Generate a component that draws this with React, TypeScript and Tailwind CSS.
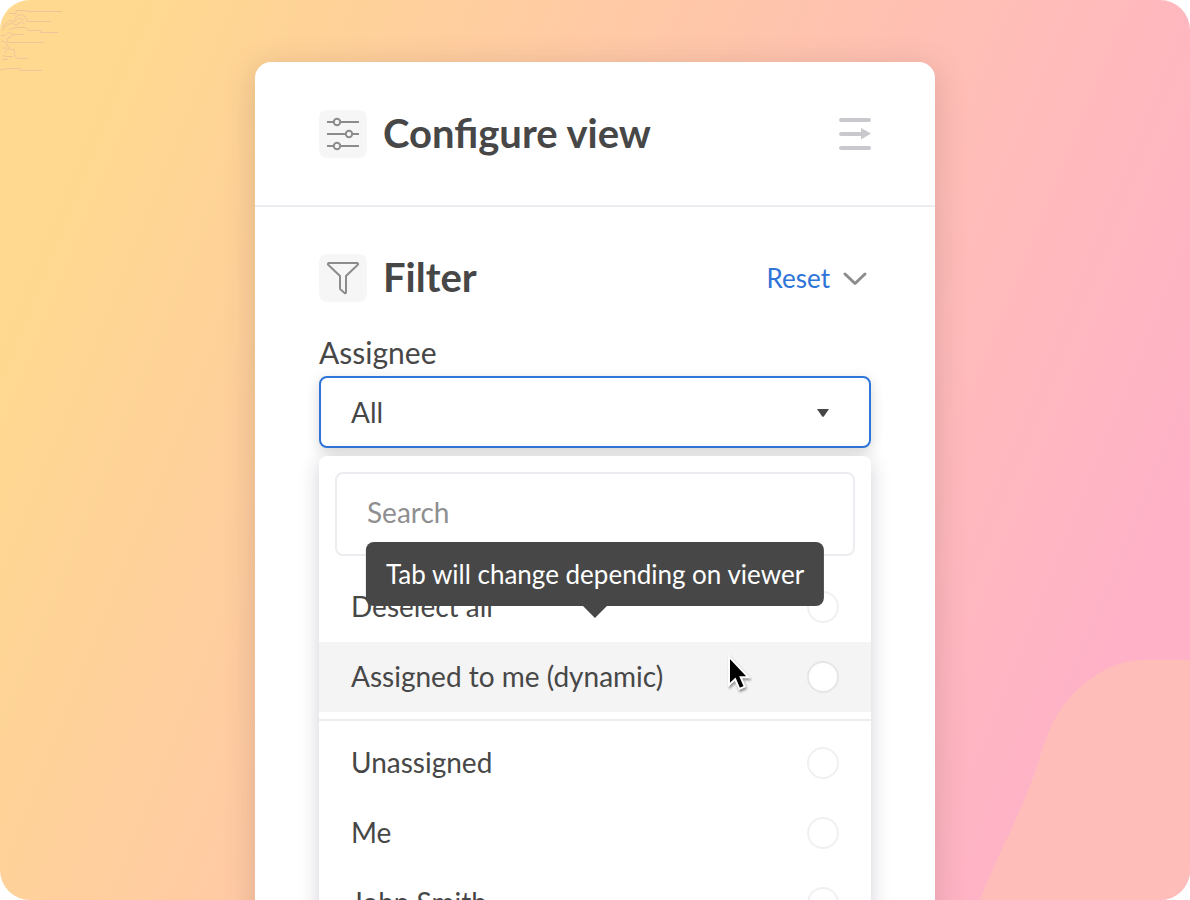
import { useState } from "react";

const people = ["Unassigned", "Me", "John Smith"];

function Option({ label, active = false }: { label: string; active?: boolean }) {
  return (
    <label
      className={
        active
          ? "flex h-[70px] items-center justify-between bg-[#f4f4f5] px-8"
          : "flex h-[70px] items-center justify-between px-8"
      }
    >
      <span className="pb-0.5">{label}</span>
      <input
        type="checkbox"
        className={
          active
            ? "size-8 shrink-0 appearance-none rounded-full border-2 border-[#e6e6e8] bg-white checked:bg-[#2f74d8]"
            : "size-8 shrink-0 appearance-none rounded-full border-2 border-[#f0f0f3] bg-white checked:bg-[#2f74d8]"
        }
      />
    </label>
  );
}

function Backdrop() {
  return (
    <>
      <svg className="absolute top-0 left-0" width="64" height="74" fill="none" stroke="#f0c49b" aria-hidden="true">
        <path d="M9 13.500h7v-3h10v1h36M14 20.500l3-5 5-1 4 3 1 4h24M3 30l1-5 6-5 4 2 5-4 5 2M4 27l7-4 5 2 5-3 4 2M9 29.500l7-2h10l2 3h13v2h17M1 35.500h4l3-3 6 2h10M7 42.500h37M7 42l1-4 6-3M1 41l4 1 2 3 2 3-4 4 1 2M2 48h5M9 49.500h5l1 7 3 2h10M3 55.500l3 1h7M2 59.500h6M0 69.500h5v-1h15v2h22" />
      </svg>
      <svg className="absolute right-0 bottom-0" width="210" height="240" viewBox="0 0 210 240" aria-hidden="true">
        <path
          d="M0 240C20 187 43 154 62 90C70 64 82 43 100 27C118 12 138 0 165 0H210V240Z"
          fill="#ffbdba"
        />
      </svg>
    </>
  );
}

function SlidersIcon() {
  return (
    <svg width="48" height="48" viewBox="0 0 48 48" fill="none" stroke="#8c8c8f" strokeWidth="2" aria-hidden="true">
      <path d="M8 12h6.500M21.500 12H40M8 24h18.500M33.500 24H40M8 36h6.500M21.500 36H40" />
      <circle cx="18" cy="12" r="3.200" />
      <circle cx="30" cy="24" r="3.200" />
      <circle cx="18" cy="36" r="3.200" />
    </svg>
  );
}

function FunnelIcon() {
  return (
    <svg width="48" height="48" viewBox="0 0 48 48" fill="none" stroke="#8c8c8f" strokeWidth="2" strokeLinejoin="round" aria-hidden="true">
      <path d="M10 9h28c1 0 1.500 1 .8 1.800L27 22v16.500c0 .8-.8 1-1.400.5L21.500 35.500c-.4-.4-.5-.8-.5-1.300V22L9.200 10.800C8.500 10 9 9 10 9Z" />
    </svg>
  );
}

function Cursor() {
  return (
    <svg
      className="pointer-events-none absolute top-[13px] left-[409px] drop-shadow-[1px_2px_1px_rgba(0,0,0,0.4)]"
      width="24"
      height="36"
      viewBox="0 0 24 36"
      aria-hidden="true"
    >
      <path
        d="M1 1.500V30L7.200 24.300L11.300 34L16.800 31.600L12.700 22.300H20.500Z"
        fill="#000"
        stroke="#fff"
        strokeWidth="2"
      />
    </svg>
  );
}

export default function App() {
  const [query, setQuery] = useState("");

  return (
    <div className="h-screen bg-white">
      <main className="relative flex h-full justify-center overflow-hidden rounded-[30px] bg-[linear-gradient(112deg,#ffd98f_8%,#ffb1c8_90%)] pt-[62px] font-[Lato,sans-serif] text-[#474747]">
        <Backdrop />
        <section className="relative h-[1000px] w-full max-w-[680px] shrink-0 rounded-2xl bg-white shadow-[0_6px_32px_rgba(110,80,80,0.24)]">
          <header className="flex items-center gap-4 border-b-2 border-[#ededf1] px-16 pt-12 pb-[47px]">
            <span className="rounded-lg bg-[#f6f6f6]">
              <SlidersIcon />
            </span>
            <h1 className="grow pb-0.5 text-[40px] leading-[46px] font-bold">Configure view</h1>
            <button type="button" aria-label="Collapse panel">
              <svg width="32" height="32" viewBox="0 0 32 32" fill="none" stroke="#c9c9cd" strokeWidth="4" strokeLinecap="round" aria-hidden="true">
                <path d="M2 2h28M2 16h20M2 30h28" />
                <path d="M22 10L32 15.500L22 21.500Z" fill="#c9c9cd" stroke="none" />
              </svg>
            </button>
          </header>

          <div className="px-16 pt-[47px]">
            <div className="flex items-center">
              <span className="mr-4 rounded-lg bg-[#f6f6f6]">
                <FunnelIcon />
              </span>
              <h2 className="grow pb-0.5 text-[40px] leading-[46px] font-bold">Filter</h2>
              <button type="button" className="mr-3 text-[26px] leading-8 text-[#2f74d8]">
                Reset
              </button>
              <button type="button" className="mr-[3px]" aria-label="Collapse filter">
                <svg width="26" height="26" viewBox="0 0 26 26" fill="none" stroke="#8c8c8f" strokeWidth="3" strokeLinecap="round" strokeLinejoin="round" aria-hidden="true">
                  <path d="M3 9l10 9.500L23 9" />
                </svg>
              </button>
            </div>

            <label htmlFor="assignee" className="mt-8 block text-[30px] leading-9">
              Assignee
            </label>
            <div className="relative mt-[6px]">
              <select
                id="assignee"
                className="block h-[72px] w-full appearance-none rounded-lg border-2 border-[#2f74d8] bg-white px-[30px] text-[28px] shadow-[0_4px_14px_rgba(0,0,0,0.16)] outline-none"
              >
                <option>All</option>
              </select>
              <svg className="pointer-events-none absolute top-8 right-[42px]" width="12" height="9" viewBox="0 0 12 9" aria-hidden="true">
                <path d="M0 1h12L7 8.300q-1 1-2 0Z" fill="#474747" />
              </svg>
            </div>

            <div className="relative mt-2 h-[600px] rounded-lg bg-white text-[28px] leading-9 shadow-[0_4px_20px_rgba(30,30,60,0.2)]">
              <div className="p-4">
                <input
                  type="search"
                  aria-label="Search assignees"
                  placeholder="Search"
                  value={query}
                  onChange={(event) => setQuery(event.target.value)}
                  className="block h-[84px] w-full rounded-lg border-2 border-[#ededf1] bg-white px-[30px] pb-1 outline-none placeholder:text-[#8f8f92]"
                />
              </div>
              <Option label="Deselect all" />
              <div className="relative">
                <Option label="Assigned to me (dynamic)" active />
                <div
                  role="tooltip"
                  className="absolute bottom-[106px] left-1/2 flex h-16 -translate-x-1/2 items-center rounded-lg bg-[#474747] px-5 text-[26px] whitespace-nowrap text-white"
                >
                  Tab will change depending on viewer
                  <svg className="absolute top-full left-1/2 -translate-x-1/2" width="24" height="12" viewBox="0 0 24 12" aria-hidden="true">
                    <path d="M0 0H24L12 12Z" fill="#474747" />
                  </svg>
                </div>
                <Cursor />
              </div>
              <hr className="my-[7px] border-t-2 border-[#ededf1]" />
              {people.map((name) => (
                <Option key={name} label={name} />
              ))}
            </div>
          </div>
        </section>
      </main>
    </div>
  );
}
